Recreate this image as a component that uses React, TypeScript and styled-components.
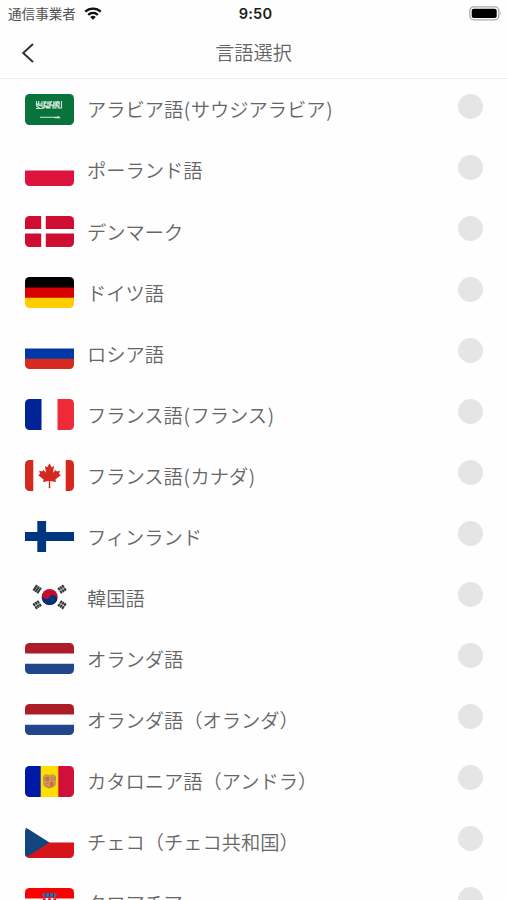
import React from 'react';
import styled, { createGlobalStyle } from 'styled-components';

const GlobalStyle = createGlobalStyle`
  * { box-sizing: border-box; }
  body { margin: 0; background: #fefefe; }
`;

const Screen = styled.div`
  display: flex;
  flex-direction: column;
  width: 507px;
  height: 900px;
  overflow: hidden;
  background: #fefefe;
  font-family: 'Noto Sans CJK JP', sans-serif;
  color: #666;
`;

const StatusBar = styled.div`
  display: grid;
  grid-template-columns: 1fr auto 1fr;
  align-items: center;
  height: 27px;
  flex: none;
  padding: 0 5px 0 8px;
`;

const Carrier = styled.div`
  display: flex;
  align-items: center;
  gap: 8px;
  font-size: 13.6px;
  line-height: 27px;
  color: #505050;
`;

const Clock = styled.div`
  padding: 1px 0 0 1px;
  font-family: Inter, 'Liberation Sans', sans-serif;
  font-weight: 600;
  font-size: 14.6px;
  line-height: 26px;
  letter-spacing: 0.2px;
  color: #1c1c1c;
`;

const BatterySlot = styled.div`
  display: flex;
  justify-content: flex-end;
`;

const NavBar = styled.header`
  display: grid;
  grid-template-columns: 56px 1fr 56px;
  align-items: center;
  height: 52px;
  flex: none;
  border-bottom: 1px solid #f0f0f0;
`;

const BackButton = styled.button`
  display: flex;
  align-items: center;
  height: 51px;
  border: 0;
  padding: 0 0 0 20px;
  background: none;
`;

const Title = styled.h1`
  margin: 0;
  text-align: center;
  font-size: 19.2px;
  font-weight: 350;
  line-height: 51px;
`;

const List = styled.ul`
  list-style: none;
  margin: 0;
  padding: 0 24px 0 25px;
`;

const Row = styled.li`
  display: grid;
  grid-template-columns: 49px 1fr 25px;
  column-gap: 13px;
  align-items: center;
  height: 61.06px;
  background: linear-gradient(#fbfbfb, #fbfbfb) 72px 100% / 384px 1px no-repeat;
`;

const FlagFrame = styled.svg`
  display: block;
  width: 49px;
  height: 31px;
  border-radius: 4.5px;
`;

const Label = styled.span`
  padding-top: 1.4px;
  font-size: 19.25px;
  font-weight: 350;
  line-height: 59.6px;
  white-space: nowrap;
`;

const Paren = styled.span`
  padding: 0 0.6px;
`;

const Radio = styled.span`
  width: 25px;
  height: 25px;
  margin-bottom: 7px;
  border-radius: 50%;
  background: #e5e5e5;
`;

const stripes = (a: string, b: string, c: string) => (
  <>
    <path fill={b} d="M0 8h49v15H0z" />
    <path fill={a} d="M0 0h49v10.4H0z" />
    <path fill={c} d="M0 20.7h49V31H0z" />
  </>
);

const pales = (a: string, b: string, c: string, x1 = 16.5, x2 = 32.5) => (
  <>
    <rect x="7" width="35" height="31" fill={b} />
    <rect width={x1} height="31" fill={a} />
    <rect x={x2} width={49 - x2} height="31" fill={c} />
  </>
);

const Trigram = ({ x, y, angle, split }: { x: number; y: number; angle: number; split: boolean }) => (
  <g transform={`translate(${x} ${y}) rotate(${angle})`} stroke="#333" strokeWidth="2">
    <path d="M-3.3 -2.4h6.6M-3.3 0h6.6M-3.3 2.4h6.6" strokeDasharray={split ? '3 .6' : undefined} />
  </g>
);

const flags: Record<string, React.ReactNode> = {
  sa: (
    <>
      <rect width="49" height="31" fill="#08733a" />
      <g fill="none" stroke="#d4e9dc" strokeWidth="1.1">
        <path d="M11.5 7v5l3 2M14 7l-1 4 4 1V7M11 14.5h6M19 7v7l-3 .5M21 7l-2 4 4 2V7M25 7v7h-4M27 7l-2 3 4 3V7M31 7v7h-4M33 7l-2 4 3 2V7M36.5 7v7h-4M11.5 10h5M20 9h5M28 9h7M24 11h9M17 13h8" />
        <path d="M15 23.2h18M33 22.2l1.5 1.5h-5" />
      </g>
    </>
  ),
  pl: <path fill="#dc143c" d="M0 15.5h49V31H0z" />,
  dk: <><rect width="49" height="31" fill="#cf0c31" /><path stroke="#fff" strokeWidth="4.6" d="M18.5 0v31M0 15.2h49" /></>,
  de: stripes('#000', '#d80000', '#ffcd00'),
  ru: stripes('#fff', '#0039a6', '#d52b1e'),
  fr: pales('#002395', '#fff', '#ef2b3a'),
  ca: (
    <>
      {pales('#d5281f', '#fff', '#d5281f', 8.3, 40.7)}
      <path
        fill="#d5281f"
        d="M24.5 3.3l-2.2 4-2.4-1.2 1.2 6.6-3-3-.7 1.7-3.3-.7 1 3.4-2.1 1 5.6 4.5-.6 2.3 5.9-.8-.2 7.2h1.6l-.2-7.2 5.9.8-.6-2.3 5.6-4.5-2.1-1 1-3.4-3.3.7-.7-1.7-3 3 1.2-6.6-2.4 1.2z"
      />
    </>
  ),
  fi: <path stroke="#003580" strokeWidth="8.8" d="M16.7 0v31M0 15.5h49" />,
  kr: (
    <>
      <circle cx="24.7" cy="15" r="8" fill="#c60c30" />
      <path fill="#003478" d="M18 10.6a4 4 0 0 0 6.7 4.4a4 4 0 0 1 6.7 4.4A8 8 0 0 1 18 10.6z" />
      <Trigram x={12.2} y={7.2} angle={-56} split={false} />
      <Trigram x={37} y={7.2} angle={56} split />
      <Trigram x={12.2} y={22.8} angle={56} split />
      <Trigram x={37} y={22.8} angle={-56} split />
    </>
  ),
  nl: stripes('#ae1c28', '#fff', '#21468b'),
  ad: (
    <>
      {pales('#0018a8', '#fedf00', '#d0103a', 15.7, 33.3)}
      <path fill="#ce9a50" d="M18 10l3-2 3.5 1L28 8l3 2v8q0 3-6.5 4.5Q18 21 18 18z" />
      <path fill="#d9653f" d="M20.5 11h3.5v4h-3.5zM25 16h3.5v4H25z" />
      <path fill="none" stroke="#a98255" d="M18 14l2-3M31 14l-2-3M20 19l4.5 2.5L29 19M25.5 12h3M25.5 14h3M20.5 17.5h3" />
    </>
  ),
  cz: <><path fill="#d7141a" d="M0 15.5h49V31H0z" /><path fill="#11457e" d="M0 0l24.5 15.5L0 31z" /></>,
  hr: (
    <>
      {stripes('#fa0000', '#fff', '#171796')}
      <path fill="#fff" d="M18 10h13v9q0 5-6.5 5T18 19z" />
      <path stroke="#f00" strokeWidth="2.4" strokeDasharray="2.6 2.6" d="M18 11.5h13M18 16.7h13" />
      <path stroke="#f00" strokeWidth="2.4" strokeDasharray="2.6 2.6" strokeDashoffset="2.6" d="M18 14.1h13" />
      <path fill="#466aa0" d="M17 6l3-1.5 2.2 1 2.3-1.3 2.3 1.3 2.2-1L32 6l-1.5 3.7-6-.7-6 .7z" />
      <path fill="none" stroke="#28345e" d="M20 5l1 4M24.5 4.5V9M29 5l-1 4" />
    </>
  ),
};

const languages = [
  { flag: 'sa', name: 'アラビア語(サウジアラビア)' },
  { flag: 'pl', name: 'ポーランド語' },
  { flag: 'dk', name: 'デンマーク' },
  { flag: 'de', name: 'ドイツ語' },
  { flag: 'ru', name: 'ロシア語' },
  { flag: 'fr', name: 'フランス語(フランス)' },
  { flag: 'ca', name: 'フランス語(カナダ)' },
  { flag: 'fi', name: 'フィンランド' },
  { flag: 'kr', name: '韓国語' },
  { flag: 'nl', name: 'オランダ語' },
  { flag: 'nl', name: 'オランダ語（オランダ）' },
  { flag: 'ad', name: 'カタロニア語（アンドラ）' },
  { flag: 'cz', name: 'チェコ（チェコ共和国）' },
  { flag: 'hr', name: 'クロアチア' },
];

const withParens = (name: string) =>
  name.split(/([()])/).map((part, i) => (/^[()]$/.test(part) ? <Paren key={i}>{part}</Paren> : part));

const WifiIcon = () => (
  <svg width="18" height="13" viewBox="0 0 18 13" fill="none" stroke="#111" strokeWidth="2.3">
    <path d="M1.2 4.6a11.5 11.5 0 0 1 15.6 0" />
    <path d="M4.2 7.8a7 7 0 0 1 9.6 0" />
    <path fill="#111" stroke="none" d="M6.2 10.1a4.2 4.2 0 0 1 5.6 0L9 12.8z" />
  </svg>
);

const BatteryIcon = () => (
  <svg width="33" height="15" viewBox="0 0 33 15">
    <rect x="0.8" y="0.8" width="29" height="13" rx="4" fill="#fff" stroke="#aaa" strokeWidth="1.3" />
    <rect x="2.7" y="2.7" width="25" height="9.3" rx="2" fill="#000" />
    <path d="M31 5.2q1.8 2.1 0 4.3z" fill="#999" />
  </svg>
);

export default function App() {
  return (
    <>
      <GlobalStyle />
      <Screen>
        <StatusBar>
          <Carrier>通信事業者<WifiIcon /></Carrier>
          <Clock>9:50</Clock>
          <BatterySlot><BatteryIcon /></BatterySlot>
        </StatusBar>
        <NavBar>
          <BackButton aria-label="戻る">
            <svg width="15" height="20" viewBox="0 0 15 20" fill="none" stroke="#333" strokeWidth="2">
              <path d="M13 1L3.2 10l9.8 9" />
            </svg>
          </BackButton>
          <Title>言語選択</Title>
        </NavBar>
        <List>
          {languages.map(({ flag, name }) => (
            <Row key={name}>
              <FlagFrame viewBox="0 0 49 31" preserveAspectRatio="none">{flags[flag]}</FlagFrame>
              <Label>{withParens(name)}</Label>
              <Radio />
            </Row>
          ))}
        </List>
      </Screen>
    </>
  );
}
